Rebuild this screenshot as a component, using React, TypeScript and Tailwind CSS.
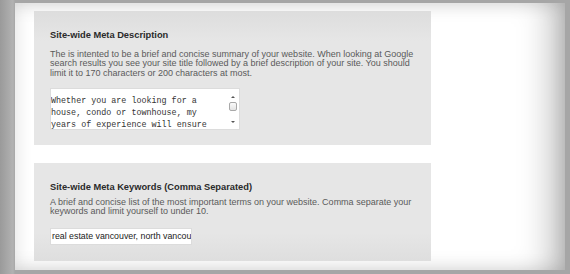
import React from "react";

function Scrollbar() {
  return (
    <div className="w-[10px] h-full flex flex-col items-center shrink-0 mr-[1px]">
      <svg width="10" height="8" viewBox="0 0 10 8" className="mt-[4px]">
        <path d="M3 5 L5 3 L7 5 Z" fill="#555" />
      </svg>
      <div className="w-[8px] h-[9px] mt-[1px] rounded-[2px] border border-[#a8a8a8] bg-[linear-gradient(to_bottom,#fafafa,#e4e4e4)]" />
      <div className="flex-1" />
      <svg width="10" height="8" viewBox="0 0 10 8" className="mb-[3px]">
        <path d="M3 3 L5 5 L7 3 Z" fill="#555" />
      </svg>
    </div>
  );
}

export default function App() {
  const sans = { fontFamily: '"Liberation Sans", Arial, sans-serif' };
  return (
    <div
      className="w-[570px] h-[274px] bg-[linear-gradient(to_right,#9a9a9a,#b2b2b2_13px,#a6a6a6_15px,#a6a6a6)] pt-[3px] pl-[15px] overflow-hidden"
      style={sans}
    >
      <div className="w-[550px] h-[267px] bg-white shadow-[inset_0_0_18px_rgba(0,0,0,0.14),inset_-30px_0_35px_-18px_rgba(0,0,0,0.28)] pt-[8px] pl-[19px] flex flex-col">
        {/* Panel 1 */}
        <div className="w-[397px] h-[134px] bg-[linear-gradient(to_bottom,#dddddd,#e6e6e6_30px,#e6e6e6)] pl-[16px] pt-[19px]">
          <div className="text-[9.3px] leading-[10px] font-bold text-[#2a2a2a]">Site-wide Meta Description</div>
          <div className="mt-[10px] w-[366px] text-[9px] leading-[9.3px] text-[#5a5a5a]">
            The is intented to be a brief and concise summary of your website. When looking at Google search results you see your site title followed by a brief description of your site. You should limit it to 170 characters or 200 characters at most.
          </div>
          <div className="mt-[10px] w-[190px] h-[42px] bg-white border border-[#dcdcdc] flex">
            <div
              className="flex-1 text-[8.4px] leading-[12px] text-[#333] pt-[6px] overflow-hidden whitespace-pre"
              style={{ fontFamily: '"Liberation Mono", "Courier New", monospace' }}
            >
              {"Whether you are looking for a\nhouse, condo or townhouse, my\nyears of experience will ensure"}
            </div>
            <Scrollbar />
          </div>
        </div>
        {/* Panel 2 */}
        <div className="mt-[18px] w-[397px] h-[98px] bg-[linear-gradient(to_bottom,#e6e6e6,#e6e6e6_70px,#dedede)] pl-[16px] pt-[19px]">
          <div className="text-[9.3px] leading-[10px] font-bold text-[#2a2a2a]">Site-wide Meta Keywords (Comma Separated)</div>
          <div className="mt-[6px] w-[366px] text-[9px] leading-[8.5px] text-[#5a5a5a]">
            A brief and concise list of the most important terms on your website. Comma separate your keywords and limit yourself to under 10.
          </div>
          <div className="mt-[13px] w-[142px] h-[17px] bg-white border border-[#dcdcdc] overflow-hidden whitespace-nowrap text-[8.8px] leading-[15px] text-[#222] pl-[1px]">
            real estate vancouver, north vancou
          </div>
        </div>
      </div>
    </div>
  );
}
